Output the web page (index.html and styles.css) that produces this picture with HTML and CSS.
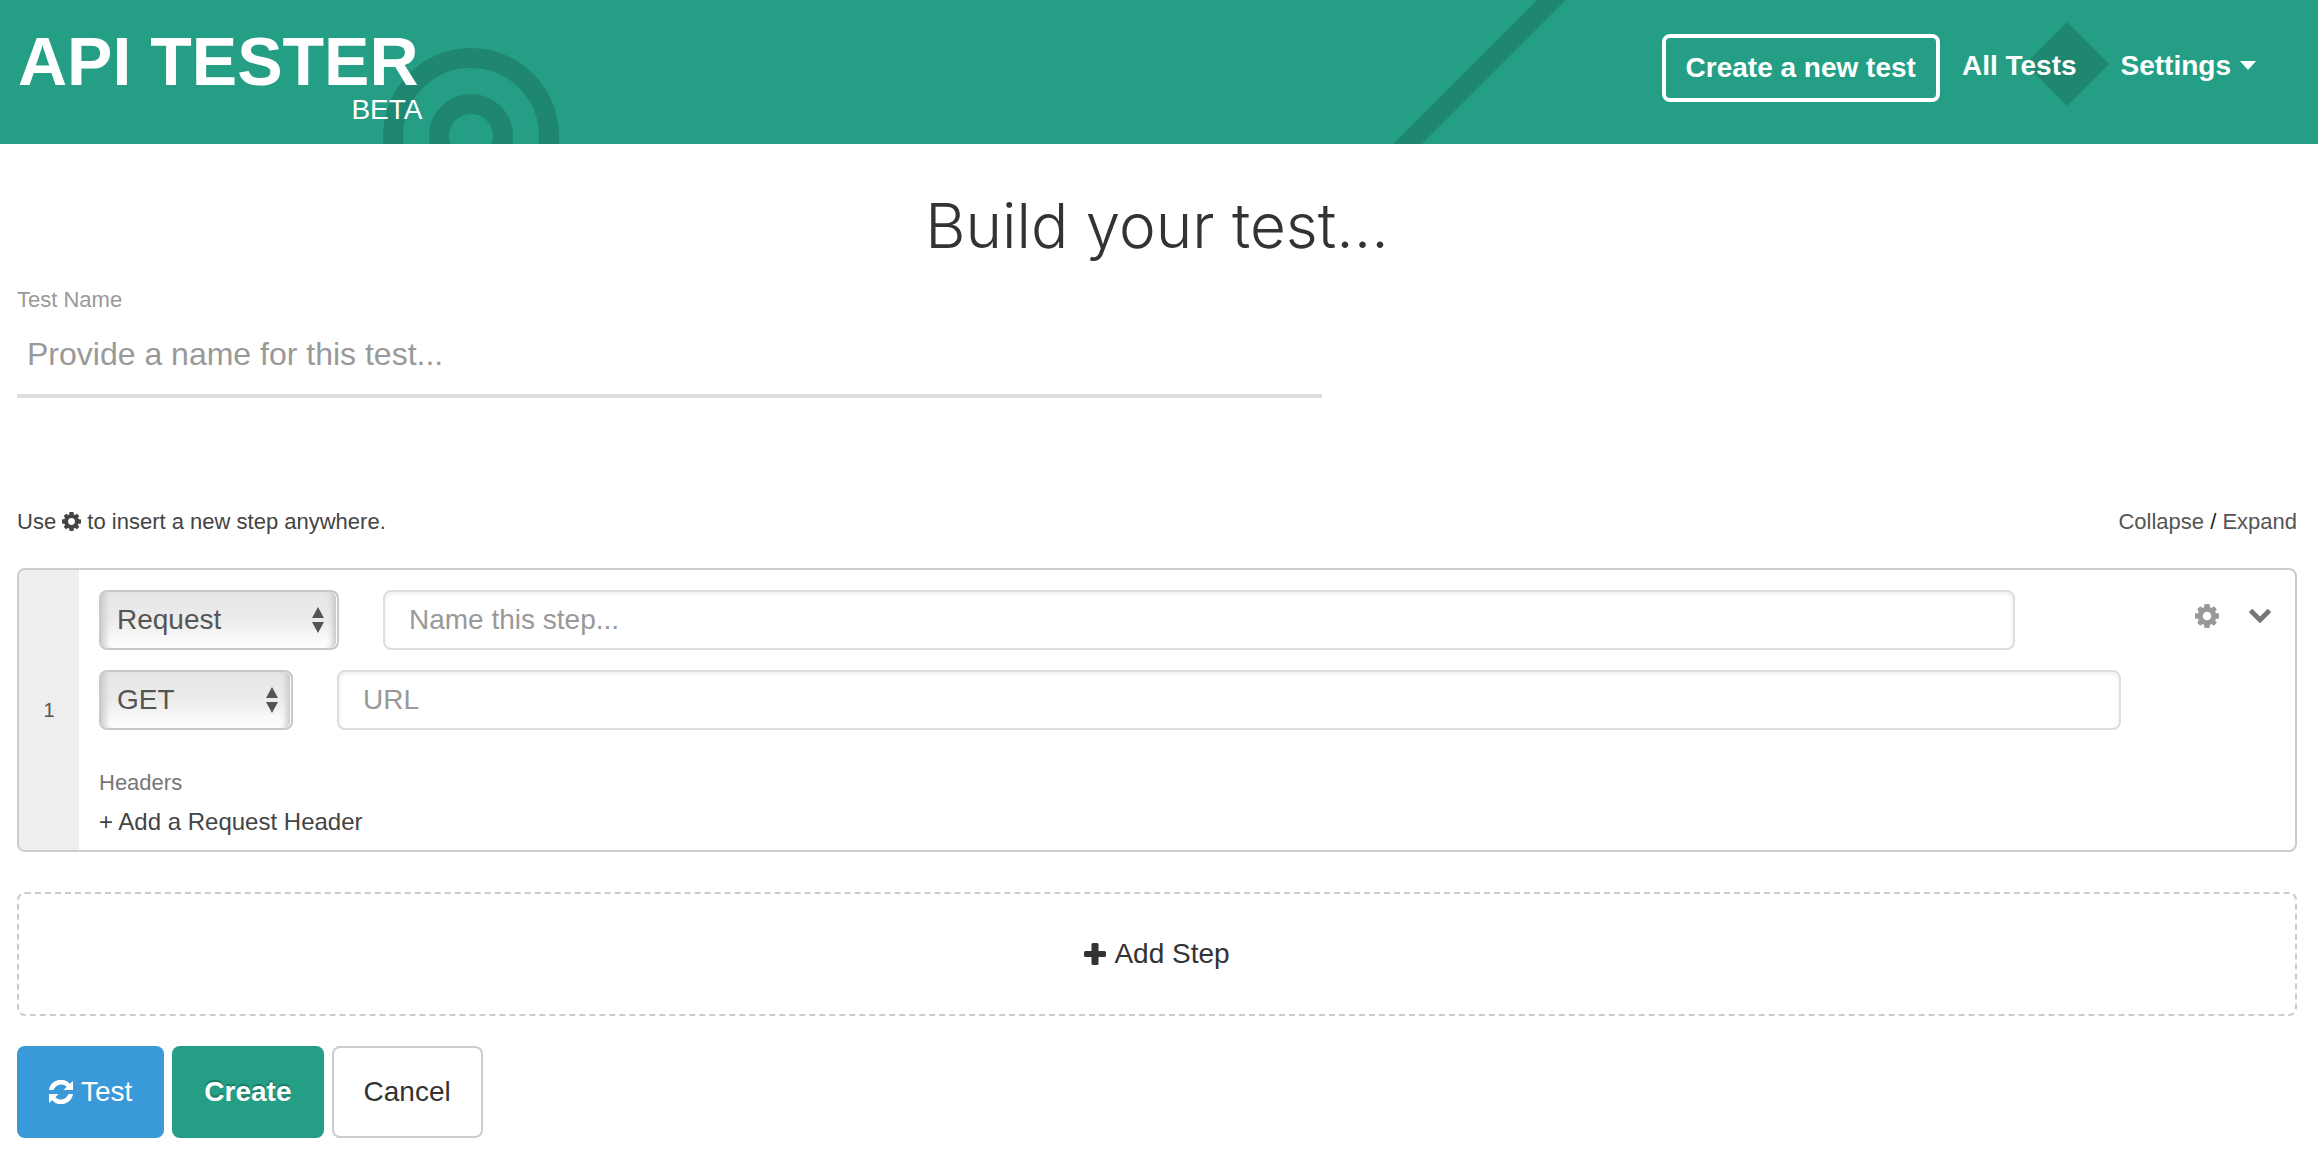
FILE: index.html
```html
<!DOCTYPE html>
<html lang="en">
<head>
    <meta charset="UTF-8">
    <meta name="viewport" content="width=device-width, initial-scale=1.0">
    <title>API Tester</title>
    <link rel="stylesheet" href="styles.css">
</head>
<body>
    <!-- shared icons -->
    <svg class="sprite" aria-hidden="true">
        <symbol id="icon-cog" viewBox="0 0 24 24">
            <circle cx="12" cy="12" r="6.800" fill="none" stroke="currentColor" stroke-width="5"/>
            <path d="M9.500 0h5l.6 4h-6.200zM9.500 24h5l.6-4h-6.200zM0 9.500v5l4 .6v-6.200zM24 9.500v5l-4 .6v-6.200z"/>
            <path d="M2.200 5.200l3-3 3.300 2.300-4 4zM21.800 5.200l-3-3-3.300 2.300 4 4zM2.200 18.800l3 3 3.300-2.300-4-4zM21.800 18.800l-3 3-3.300-2.300 4-4z"/>
        </symbol>
        <symbol id="icon-arrows" viewBox="0 0 12 26">
            <path d="M6 0l6 11H0zM6 26L0 15h12z"/>
        </symbol>
    </svg>

    <header class="header">
        <svg class="header-art" width="2318" height="144" aria-hidden="true">
            <circle cx="471" cy="136" r="78"/>
            <circle cx="471" cy="136" r="32"/>
            <path d="M1537 0h29L1422 144h-29z"/>
            <path d="M2067 22l42 42-42 42-42-42z"/>
        </svg>
        <a class="logo" href="#">
            <span class="logo-name">API TESTER</span>
            <span class="logo-tag">BETA</span>
        </a>
        <nav class="nav">
            <a class="nav-new" href="#">Create a new test</a>
            <a class="nav-link" href="#">All Tests</a>
            <a class="nav-link" href="#">Settings<span class="caret"></span></a>
        </nav>
    </header>

    <main class="container">
        <h1>Build your test...</h1>

        <div class="test-name">
            <label for="test-name">Test Name</label>
            <input type="text" id="test-name" placeholder="Provide a name for this test...">
        </div>

        <div class="hint">
            <p>Use <svg class="cog-small" aria-hidden="true"><use href="#icon-cog"/></svg> to insert a new step anywhere.</p>
            <p class="toggle"><a href="#">Collapse</a> / <a href="#">Expand</a></p>
        </div>

        <section class="step">
            <div class="step-number">1</div>
            <div class="step-body">
                <div class="step-row">
                    <div class="select select-type">
                        <select aria-label="Step type">
                            <option>Request</option>
                        </select>
                        <svg aria-hidden="true"><use href="#icon-arrows"/></svg>
                    </div>
                    <input class="field" type="text" aria-label="Step name" placeholder="Name this step...">
                    <div class="step-actions">
                        <button type="button" aria-label="Step options">
                            <svg class="cog" aria-hidden="true"><use href="#icon-cog"/></svg>
                        </button>
                        <button type="button" aria-label="Collapse step">
                            <svg class="chevron" viewBox="90 533 1612 1035" aria-hidden="true">
                                <path d="M1683 808l-742 741q-19 19-45 19t-45-19l-742-741q-19-19-19-45.500t19-45.500l166-165q19-19 45-19t45 19l531 531 531-531q19-19 45-19t45 19l166 165q19 19 19 45.500t-19 45.500z"/>
                            </svg>
                        </button>
                    </div>
                </div>
                <div class="step-row step-row-url">
                    <div class="select select-method">
                        <select aria-label="Method">
                            <option>GET</option>
                        </select>
                        <svg aria-hidden="true"><use href="#icon-arrows"/></svg>
                    </div>
                    <input class="field" type="text" aria-label="URL" placeholder="URL">
                </div>
                <p class="headers-title">Headers</p>
                <a class="add-header" href="#">+ Add a Request Header</a>
            </div>
        </section>

        <button type="button" class="add-step">
            <svg class="plus" viewBox="0 0 22 22" aria-hidden="true">
                <path d="M9 0h4q1.500 0 1.500 1.500v6.500h6q1.500 0 1.500 1.500v3q0 1.500-1.500 1.500h-6v6.500q0 1.500-1.500 1.500h-4q-1.500 0-1.500-1.500v-6.500h-6q-1.500 0-1.500-1.500v-3q0-1.500 1.500-1.500h6v-6.500q0-1.500 1.500-1.500z"/>
            </svg>
            Add Step
        </button>

        <div class="buttons">
            <button type="button" class="btn btn-test">
                <svg class="refresh" viewBox="0 0 24 24" aria-hidden="true">
                    <path d="M0 10A12 12 0 0 1 20.800 3.800L24 1v9h-9.500l3.200-3.200A8 8 0 0 0 4.500 10z"/>
                    <path d="M24 14A12 12 0 0 1 3.200 20.200L0 23v-9h9.500l-3.200 3.200A8 8 0 0 0 19.500 14z"/>
                </svg>
                Test
            </button>
            <button type="button" class="btn btn-create">Create</button>
            <button type="button" class="btn btn-cancel">Cancel</button>
        </div>
    </main>
</body>
</html>
```
FILE: styles.css
```css
* {
    box-sizing: border-box;
}
body {
    margin: 0;
    font-family: "Liberation Sans", Arial, sans-serif;
    font-size: 22px;
    line-height: 28px;
    color: #222;
    background: #fff;
}
a {
    color: #444;
    text-decoration: none;
}
p {
    margin: 0;
}
svg {
    fill: currentColor;
}
button, input, select {
    font-family: inherit;
    font-size: 28px;
}
button {
    cursor: pointer;
}
.sprite {
    display: none;
}

/* header */
.header {
    position: relative;
    display: flex;
    justify-content: space-between;
    align-items: flex-start;
    height: 144px;
    padding: 24px 40px 0 18px;
    overflow: hidden;
    background: #249f85;
}
.header-art {
    position: absolute;
    top: 0;
    left: 0;
    fill: #1f8770;
}
.header-art circle {
    fill: none;
    stroke: #1f8770;
    stroke-width: 20;
}
.logo {
    position: relative;
    display: flex;
    flex-direction: column;
    color: #fff;
}
.logo-name {
    padding-right: 4px;
    font-size: 68px;
    line-height: 74px;
    font-weight: bold;
}
.logo-tag {
    align-self: flex-end;
    font-size: 28px;
    line-height: 24px;
}
.nav {
    position: relative;
    display: flex;
    align-items: center;
    padding-top: 10px;
    font-size: 28px;
    font-weight: bold;
}
.nav a {
    color: #fff;
}
.nav-new {
    padding: 16px 20px;
    border: 4px solid #fff;
    border-radius: 8px;
}
.nav-link {
    padding: 0 22px 4px;
}
.caret {
    display: inline-block;
    margin-left: 9px;
    vertical-align: 5px;
    border-top: 9px solid #fff;
    border-left: 8px solid transparent;
    border-right: 8px solid transparent;
}

/* page */
.container {
    padding: 44px 21px 20px 17px;
}
h1 {
    margin: 0 0 22px;
    font-family: Inter, "Liberation Sans", sans-serif;
    font-size: 62px;
    line-height: 76px;
    font-weight: 300;
    text-align: center;
    color: #333;
}
.test-name {
    width: calc(58% - 17px);
}
.test-name label {
    display: block;
    color: #999;
}
.test-name input {
    display: block;
    width: 100%;
    height: 84px;
    padding: 0 10px;
    border: none;
    border-bottom: 4px solid #ddd;
    font-size: 32px;
    outline: none;
}
::placeholder {
    color: #999;
    opacity: 1;
}
.hint {
    display: flex;
    justify-content: space-between;
    margin: 110px 0 32px;
    color: #444;
}
.cog-small {
    width: 19px;
    height: 19px;
    vertical-align: -2px;
}
.toggle {
    color: #222;
}
.toggle a {
    color: #555;
}

/* step */
.step {
    display: flex;
    border: 2px solid #ccc;
    border-radius: 8px;
    overflow: hidden;
}
.step-number {
    display: flex;
    align-items: center;
    justify-content: center;
    width: 60px;
    background: #eee;
    font-size: 20px;
    color: #555;
}
.step-body {
    flex: 1;
    padding: 20px 20px 13px;
}
.step-row {
    display: flex;
    margin-bottom: 20px;
}
.step-row-url {
    padding-right: 154px;
    margin-bottom: 39px;
}
.select {
    position: relative;
    margin-right: 44px;
}
.select select {
    width: 100%;
    height: 60px;
    padding: 0 40px 2px 16px;
    appearance: none;
    border: 2px solid #c8c8c8;
    border-radius: 8px;
    background: linear-gradient(#e6e6e6, #ececec 50%, #fff);
    box-shadow: inset 10px 0 6px -6px #ccc, inset -1px 0 0 #fff, inset -10px 0 6px -6px #c4c4c4;
    color: #555;
}
.select svg {
    position: absolute;
    top: 17px;
    right: 15px;
    width: 12px;
    height: 26px;
    color: #555;
    pointer-events: none;
}
.select-type {
    width: 240px;
}
.select-method {
    width: 194px;
}
.field {
    flex: 1;
    min-width: 0;
    height: 60px;
    padding: 0 24px;
    border: 2px solid #ddd;
    border-radius: 8px;
    box-shadow: inset 0 2px 4px #eee;
    outline: none;
}
.step-actions {
    display: flex;
    justify-content: flex-end;
    align-items: flex-start;
    gap: 30px;
    width: 260px;
    padding: 14px 4px 0 0;
}
.step-actions button {
    display: flex;
    align-items: center;
    height: 24px;
    padding: 0;
    border: none;
    background: none;
    color: #777;
}
.cog {
    width: 24px;
    height: 24px;
    color: #999;
}
.chevron {
    width: 22px;
    height: 14px;
}
.headers-title {
    margin-bottom: 11px;
    color: #777;
}
.add-header {
    font-size: 24px;
}

/* footer actions */
.add-step {
    display: flex;
    align-items: center;
    justify-content: center;
    gap: 8px;
    width: 100%;
    height: 124px;
    margin: 40px 0 30px;
    border: 2px dashed #ccc;
    border-radius: 8px;
    background: #fff;
    color: #333;
}
.plus {
    width: 22px;
    height: 22px;
}
.buttons {
    display: flex;
    gap: 8px;
}
.btn {
    display: flex;
    align-items: center;
    gap: 8px;
    height: 92px;
    padding: 0 32px;
    border: none;
    border-radius: 8px;
    color: #fff;
}
.btn-test {
    background: #3a99d9;
}
.btn-create {
    background: #249f85;
    font-weight: bold;
    text-shadow: 0 -2px 1px #1b7763;
}
.btn-cancel {
    border: 2px solid #ccc;
    padding: 0 30px;
    background: #fff;
    color: #333;
}
.refresh {
    width: 24px;
    height: 24px;
}
```
